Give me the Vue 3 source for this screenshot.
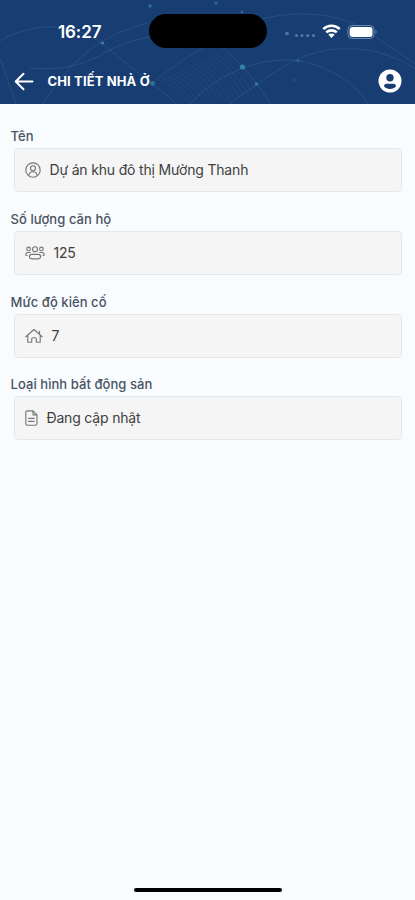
<script setup>
import { ref } from 'vue';

const title = ref('CHI TIẾT NHÀ Ở');

const fields = ref([
    { key: 'name', label: 'Tên', icon: 'user', value: 'Dự án khu đô thị Mường Thanh' },
    { key: 'count', label: 'Số lượng căn hộ', icon: 'group', value: '125' },
    { key: 'level', label: 'Mức độ kiên cố', icon: 'home', value: '7' },
    { key: 'type', label: 'Loại hình bất động sản', icon: 'file', value: 'Đang cập nhật' }
]);

// diagonal hatch lines of the header background
const hatches = Array.from({ length: 15 }, (_, i) => ({
    id: i,
    d: `M${158 + i * 4.5} ${80 - i * 2} Q${175 + i * 4.7} ${84 - i * 1.6} ${190 + i * 5} ${104 - i * 0.5}`
}));
</script>

<template>
    <div class="screen">
        <header class="header">
            <svg class="header-bg" viewBox="0 0 415 104" fill="none">
                <g stroke="#6f9cc4" stroke-opacity="0.2" stroke-width="0.9">
                    <path d="M0 41C18 30 38 26 58 27C82 30 98 39 110 50C132 70 156 84 176 104" />
                    <path d="M30 68C65 71 86 64 108 51C122 44 133 40 150 37" />
                    <path d="M43 104C63 72 92 36 148 23" />
                    <path d="M223 48C242 65 258 82 270 104" />
                    <path d="M190 104C225 65 285 48 325 69C347 78 360 91 368 104" />
                    <path d="M229 104C269 77 297 50 340 49C374 47 397 57 415 69" />
                    <path d="M258 20C301 8 347 14 374 36C394 49 407 58 415 64" />
                    <path d="M152 83C168 70 185 58 202 48" />
                    <path d="M0 58L16 104" />
                </g>
                <g stroke="#6f9cc4" stroke-opacity="0.13" stroke-width="0.7">
                    <path v-for="line in hatches" :key="line.id" :d="line.d" />
                </g>
                <g fill="#3385a3">
                    <circle cx="242.500" cy="67" r="2.600" />
                    <circle cx="152.500" cy="83.500" r="2.400" opacity="0.7" />
                    <circle cx="102.500" cy="43" r="1.600" />
                    <circle cx="150" cy="6" r="1.800" opacity="0.7" />
                    <circle cx="256.500" cy="84" r="1.800" opacity="0.8" />
                    <circle cx="298" cy="61" r="1.500" opacity="0.5" />
                    <circle cx="216" cy="3" r="1.600" opacity="0.7" />
                    <circle cx="242" cy="12" r="1.300" opacity="0.7" />
                    <circle cx="294" cy="80" r="1.500" opacity="0.25" />
                </g>
            </svg>
            <div class="status-bar">
                <span class="time">16:27</span>
                <div class="island"></div>
                <svg class="status-icons" width="94" height="20" viewBox="0 0 94 20">
                    <g fill="#6384ac" opacity="0.85">
                        <circle cx="4" cy="12.500" r="1.800" />
                        <circle cx="13.500" cy="14.500" r="1.500" />
                        <circle cx="19" cy="14.500" r="1.500" />
                        <circle cx="24.800" cy="14.500" r="1.500" />
                        <circle cx="30.500" cy="14.500" r="1.500" />
                    </g>
                    <g fill="none" stroke="#fff" stroke-width="2.600">
                        <path d="M40.300 8.100C45 3.600 52 3.600 56.700 8.100" />
                        <path d="M43.200 11.400C46.200 8.700 50.800 8.700 53.800 11.400" />
                    </g>
                    <path d="M45.300 13.600C47.200 12 49.800 12 51.700 13.600L48.500 16.900Z" fill="#fff" />
                    <rect x="65" y="4.500" width="26" height="13" rx="4" fill="none" stroke="#6c89b0" />
                    <rect x="66.700" y="6" width="22.800" height="10" rx="2.700" fill="#fff" />
                    <path d="M92.500 9V13C94 12.500 94 9.500 92.500 9Z" fill="#6c89b0" />
                </svg>
            </div>
            <div class="nav-bar">
                <button class="back" aria-label="Quay lại">
                    <svg width="20" height="20" viewBox="0 0 20 20" fill="none" stroke="#fff" stroke-width="2" stroke-linecap="round" stroke-linejoin="round">
                        <path d="M18.500 10.500H2M9.500 2.700L1.700 10.500L9.500 18.300" />
                    </svg>
                </button>
                <h1 class="title">{{ title }}</h1>
                <svg class="avatar" width="24" height="24" viewBox="0 0 24 24">
                    <circle cx="12" cy="12" r="11.500" fill="#fff" />
                    <circle cx="12" cy="8.700" r="3.700" fill="#183d75" />
                    <path d="M8.500 14.700H15.500C17 14.700 18 15.800 18 17.200C16.700 19 14.600 20 12 20S7.300 19 6 17.200C6 15.800 7 14.700 8.500 14.700Z" fill="#183d75" />
                </svg>
            </div>
        </header>

        <main class="content">
            <section v-for="field in fields" :key="field.key" class="field">
                <div class="label">{{ field.label }}</div>
                <div class="box">
                    <svg v-if="field.icon === 'user'" class="icon" width="16" height="16" viewBox="0 0 16 16">
                        <circle cx="8" cy="8" r="7.200" />
                        <circle cx="8" cy="6.200" r="2.500" />
                        <path d="M3.900 13.200C4.200 10.800 5.600 9.700 8 9.700S11.800 10.800 12.100 13.200" />
                    </svg>
                    <svg v-else-if="field.icon === 'group'" class="icon" width="20" height="16" viewBox="0 0 20 16">
                        <circle cx="10" cy="4.200" r="2.500" />
                        <circle cx="3.600" cy="3.900" r="1.800" />
                        <circle cx="16.400" cy="3.900" r="1.800" />
                        <rect x="4.400" y="9.300" width="11.200" height="4.500" rx="2.200" />
                        <path d="M5.300 7.500H2.700C1.400 7.500 0.800 8.300 0.800 9.400C0.800 10 1.300 10.400 2 10.400M14.700 7.500H17.300C18.600 7.500 19.200 8.300 19.200 9.400C19.200 10 18.700 10.400 18 10.400" />
                    </svg>
                    <svg v-else-if="field.icon === 'home'" class="icon" width="18" height="16" viewBox="0 0 18 16">
                        <path d="M0.800 8.800L9 1.500L17.200 8.800M2.800 7.200V14.200H6.700V11C6.700 10.200 7.200 9.700 8 9.700H10C10.800 9.700 11.300 10.200 11.300 11V14.200H15.200V7.200M14.500 6V3.200" />
                    </svg>
                    <svg v-else class="icon" width="13" height="16" viewBox="0 0 13 16">
                        <path d="M2.500 0.800H8L12 4.800V13.500C12 14.500 11.400 15.200 10.300 15.200H2.500C1.400 15.200 0.800 14.500 0.800 13.500V2.500C0.800 1.500 1.400 0.800 2.500 0.800ZM8 0.800V4.800H12M3.500 8.300H9.300M3.500 11.300H9.300" />
                    </svg>
                    <span class="value">{{ field.value }}</span>
                </div>
            </section>
        </main>

        <div class="home-indicator"></div>
    </div>
</template>

<style>
body {
    margin: 0;
    background: #f8fcff;
}
</style>

<style scoped>
.screen {
    display: flex;
    flex-direction: column;
    height: 900px;
    box-sizing: border-box;
    overflow: hidden;
    background: #f8fcff;
    font-family: Inter, "Liberation Sans", sans-serif;
}

.header {
    position: relative;
    flex: none;
    height: 104px;
    background: #183d73;
    color: #fff;
}

.header-bg {
    position: absolute;
    inset: 0;
    width: 100%;
    height: 100%;
}

.status-bar {
    position: relative;
    display: flex;
    align-items: center;
    height: 34px;
    padding: 14px 37px 0 58px;
}

.time {
    width: 91px;
    padding-top: 1px;
    font-size: 17px;
    font-weight: 600;
    letter-spacing: -0.100px;
}

.island {
    width: 118px;
    height: 34px;
    border-radius: 17px;
    background: #000;
}

.status-icons {
    margin-left: 16px;
}

.nav-bar {
    position: relative;
    display: flex;
    align-items: center;
    height: 24px;
    padding: 21px 13px 0 14px;
}

.back {
    display: flex;
    padding: 0;
    border: none;
    background: none;
}

.title {
    flex: 1;
    margin: 0 0 0 13.500px;
    font-size: 13px;
    font-weight: 700;
    line-height: 20px;
    letter-spacing: 0.130px;
}

.content {
    flex: 1;
    padding: 24px 13px 0 10.500px;
}

.field {
    margin-bottom: 18.800px;
}

.label {
    height: 20px;
    color: #4a5361;
    font-size: 13px;
    font-weight: 500;
    line-height: 17px;
    letter-spacing: 0.060px;
}

.box {
    display: flex;
    align-items: center;
    height: 44px;
    box-sizing: border-box;
    margin-left: 3.500px;
    padding-left: 9.500px;
    border: 1px solid #e4e8eb;
    border-radius: 4px;
    background: #f5f5f5;
}

.icon {
    flex: none;
    fill: none;
    stroke: #777;
    stroke-width: 1.150;
    stroke-linecap: round;
    stroke-linejoin: round;
}

.value {
    margin-left: 9px;
    color: #404040;
    font-size: 14px;
    line-height: 20px;
    letter-spacing: -0.180px;
}

.home-indicator {
    flex: none;
    width: 148px;
    height: 4px;
    margin: 0 auto 8px;
    border-radius: 2px;
    background: #000;
}
</style>
